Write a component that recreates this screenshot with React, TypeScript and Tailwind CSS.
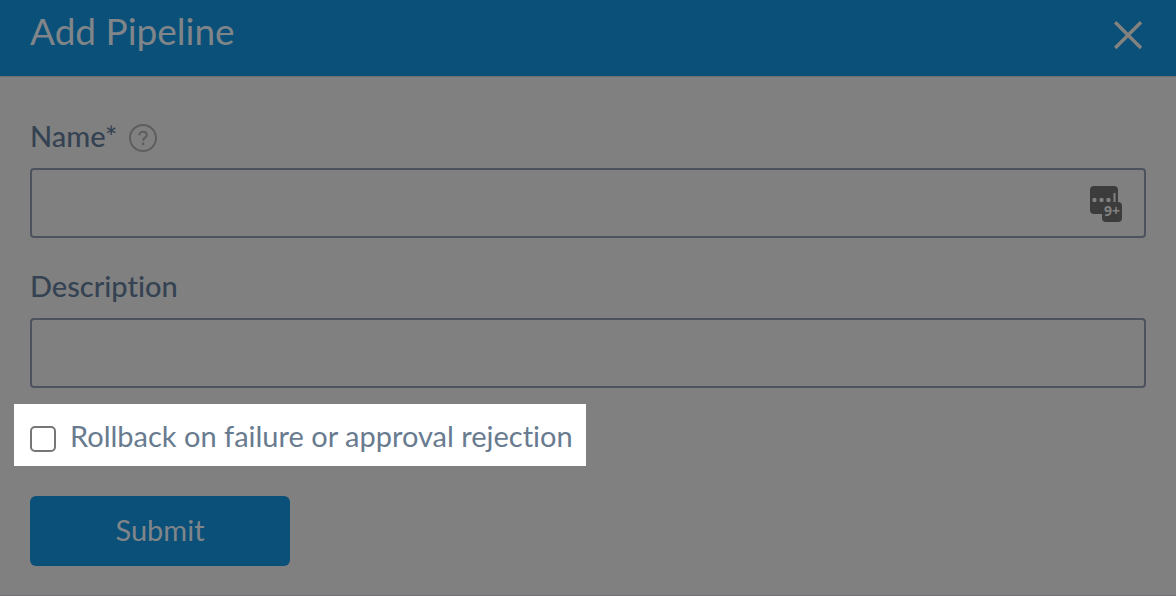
export default function App() {
  return (
    <main className="min-h-screen border-b border-[#736f72] bg-[#808080] font-['Lato',sans-serif] text-[29px] leading-8 [font-variant-ligatures:none]">
      <header className="flex h-[77px] items-start justify-between border-b border-[#6b7073] bg-[#0b5078] pr-[27px] pl-[30px] text-[#808589]">
        <h1 className="pt-[11px] text-[37px] leading-[40px] font-normal">Add Pipeline</h1>
        <button type="button" aria-label="Close" className="mt-[14px] p-1">
          <svg className="size-[34px]" viewBox="0 0 34 34" fill="none" stroke="#84827f" strokeWidth="3.4">
            <path d="M4.2 4.2 30 30M30 4.2 4.2 30" />
          </svg>
        </button>
      </header>

      <form className="px-[30px] pt-[43px] pb-[29px]" onSubmit={(e) => e.preventDefault()}>
        <div className="flex items-center gap-3">
          <label htmlFor="name" className="font-medium text-[#344252]">
            Name*
          </label>
          <svg className="mt-1 size-7" viewBox="0 0 28 28" fill="none" stroke="#5c5e5f" strokeWidth="2" role="img" aria-label="Help">
            <circle cx="14" cy="14" r="13" />
            <path d="M10.3 11.3c0-2.2 1.6-3.5 3.8-3.5s3.7 1.3 3.7 3.2c0 1.6-1 2.3-2.2 3-1.1.7-1.5 1.2-1.5 2.7" strokeWidth="2.1" />
            <path d="M14.1 18.6v2.6" strokeWidth="2.4" />
          </svg>
        </div>
        <div className="relative mt-4">
          <input
            id="name"
            type="text"
            className="block h-[70px] w-full rounded-[4px] border-2 border-[#4c535f] bg-transparent pr-20 pl-4 text-[#344252] outline-none"
          />
          <svg className="absolute top-[17px] right-6 h-[38px] w-[33px]" viewBox="0 0 33 38" aria-hidden="true">
            <rect x="1" y="1" width="28" height="28" rx="4" fill="#3c3c3c" />
            <g fill="#808080">
              <rect x="3.5" y="13" width="4" height="4" rx="1" />
              <rect x="10.5" y="13" width="4" height="4" rx="1" />
              <rect x="17.5" y="13" width="4" height="4" rx="1" />
              <rect x="24.5" y="8" width="2" height="9" />
            </g>
            <rect x="13" y="17" width="20" height="20" rx="4" fill="#3c3c3c" />
            <text x="23" y="31" textAnchor="middle" fontSize="14" fontWeight="700" fontFamily="Open Sans, sans-serif" fill="#808080">
              9+
            </text>
          </svg>
        </div>

        <label htmlFor="description" className="mt-8 block font-medium text-[#344252]">
          Description
        </label>
        <input
          id="description"
          type="text"
          className="mt-4 block h-[70px] w-full rounded-[4px] border-2 border-[#4c535f] bg-transparent px-4 text-[#344252] outline-none"
        />

        <div className="-mx-4 mt-4 flex h-[62px] w-[572px] max-w-full items-center gap-[14px] bg-white px-4 pt-1">
          <input
            id="rollback"
            type="checkbox"
            className="mt-1 size-[26px] shrink-0 appearance-none rounded-[5px] border-2 border-[#767676] bg-white checked:bg-[#0b5078]"
          />
          <label htmlFor="rollback" className="pb-[2px] whitespace-nowrap text-[#687b8f]">
            Rollback on failure or approval rejection
          </label>
        </div>

        <button type="submit" className="mt-[30px] block h-[70px] w-[260px] rounded-[6px] bg-[#0b5078] pb-[2px] text-[#808589]">
          Submit
        </button>
      </form>
    </main>
  );
}
